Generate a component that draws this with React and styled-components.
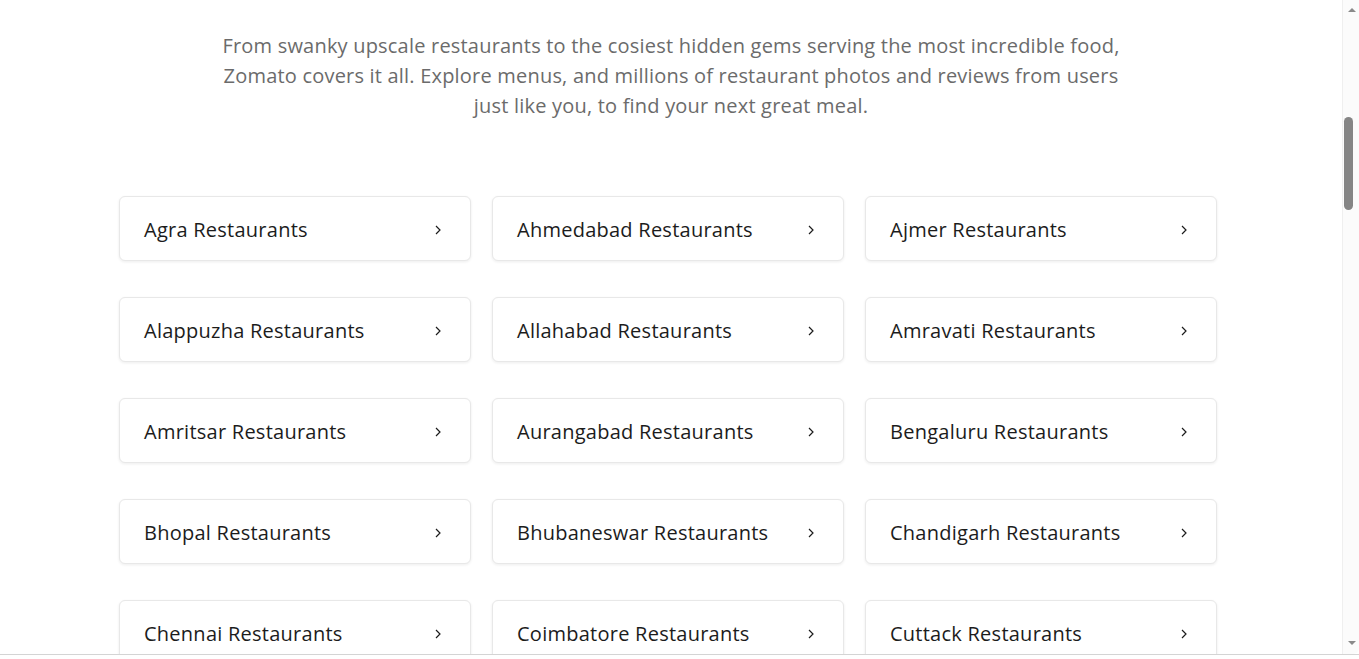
import React from "react"
import styled, { createGlobalStyle } from "styled-components"

const cities = [
    "Agra", "Ahmedabad", "Ajmer", "Alappuzha", "Allahabad", "Amravati",
    "Amritsar", "Aurangabad", "Bengaluru", "Bhopal", "Bhubaneswar", "Chandigarh",
    "Chennai", "Coimbatore", "Cuttack", "Darjeeling", "Dehradun", "Dharamshala",
]

const GlobalStyle = createGlobalStyle`
    html, body {
        margin: 0;
        padding: 0;
        background: #ffffff;
        overflow: hidden;
    }
    body {
        font-family: "Open Sans", "Liberation Sans", sans-serif;
    }
`

export default function App() {
    return (
        <>
            <GlobalStyle />
            <Shell>
                <Page>
                    <Intro>
                        From swanky upscale restaurants to the cosiest hidden gems serving the most incredible food,<br />
                        Zomato covers it all. Explore menus, and millions of restaurant photos and reviews from users<br />
                        just like you, to find your next great meal.
                    </Intro>
                    <CityGrid>
                        {cities.map((city) => (
                            <CityCard key={city} href="#">
                                <CityName>{city} Restaurants</CityName>
                                <Chevron viewBox="0 0 6 10" aria-hidden="true">
                                    <path d="M1 1 L5 5 L1 9" />
                                </Chevron>
                            </CityCard>
                        ))}
                    </CityGrid>
                </Page>
                <ScrollRail>
                    <Arrow viewBox="0 0 8 5"><path d="M0 5 L4 1 L8 5 Z" /></Arrow>
                    <Thumb />
                    <RailSpacer />
                    <Arrow viewBox="0 0 8 5"><path d="M0 0 L4 4 L8 0 Z" /></Arrow>
                </ScrollRail>
            </Shell>
        </>
    )
}

const Shell = styled.div`
    display: flex;
    height: 655px;
    overflow: hidden;
    border-bottom: 1px solid #d4d4d4;
    box-sizing: border-box;
`

const Page = styled.main`
    flex: 1;
    min-width: 0;
    padding: 31px 0 60px;
`

const Intro = styled.p`
    margin: 0 auto;
    text-align: center;
    font-size: 20px;
    line-height: 30px;
    letter-spacing: 0.2px;
    color: #6b6b6b;
    font-weight: 400;
`

const CityGrid = styled.div`
    display: grid;
    grid-template-columns: repeat(3, 352px);
    column-gap: 21px;
    row-gap: 36px;
    width: 1098px;
    margin: 75px auto 0;
    transform: translateX(-3px);
`

const CityCard = styled.a`
    display: flex;
    align-items: center;
    justify-content: space-between;
    height: 65px;
    box-sizing: border-box;
    padding: 2px 29px 0 24px;
    border: 1px solid #e8e8e8;
    border-radius: 6px;
    background: #ffffff;
    box-shadow: rgba(28, 28, 28, 0.08) 0px 1px 3px;
    text-decoration: none;
`

const CityName = styled.span`
    font-size: 20px;
    color: #1c1c1c;
    letter-spacing: 0.25px;
`

const Chevron = styled.svg`
    width: 6px;
    height: 10px;
    fill: none;
    stroke: #1c1c1c;
    stroke-width: 1.2;
`

const ScrollRail = styled.aside`
    width: 17px;
    flex-shrink: 0;
    display: flex;
    flex-direction: column;
    align-items: flex-start;
    padding: 7px 0 8px 1px;
    box-sizing: border-box;
    background: #fbfbfb;
    border-left: 1px solid #efefef;
    border-bottom-right-radius: 6px;
`

const Arrow = styled.svg`
    width: 8px;
    height: 5px;
    margin-left: 4px;
    fill: #8a8a8a;
`

const Thumb = styled.div`
    width: 9px;
    height: 93px;
    margin-top: 105px;
    border-radius: 5px;
    background: #858585;
`

const RailSpacer = styled.div`
    flex: 1;
`
